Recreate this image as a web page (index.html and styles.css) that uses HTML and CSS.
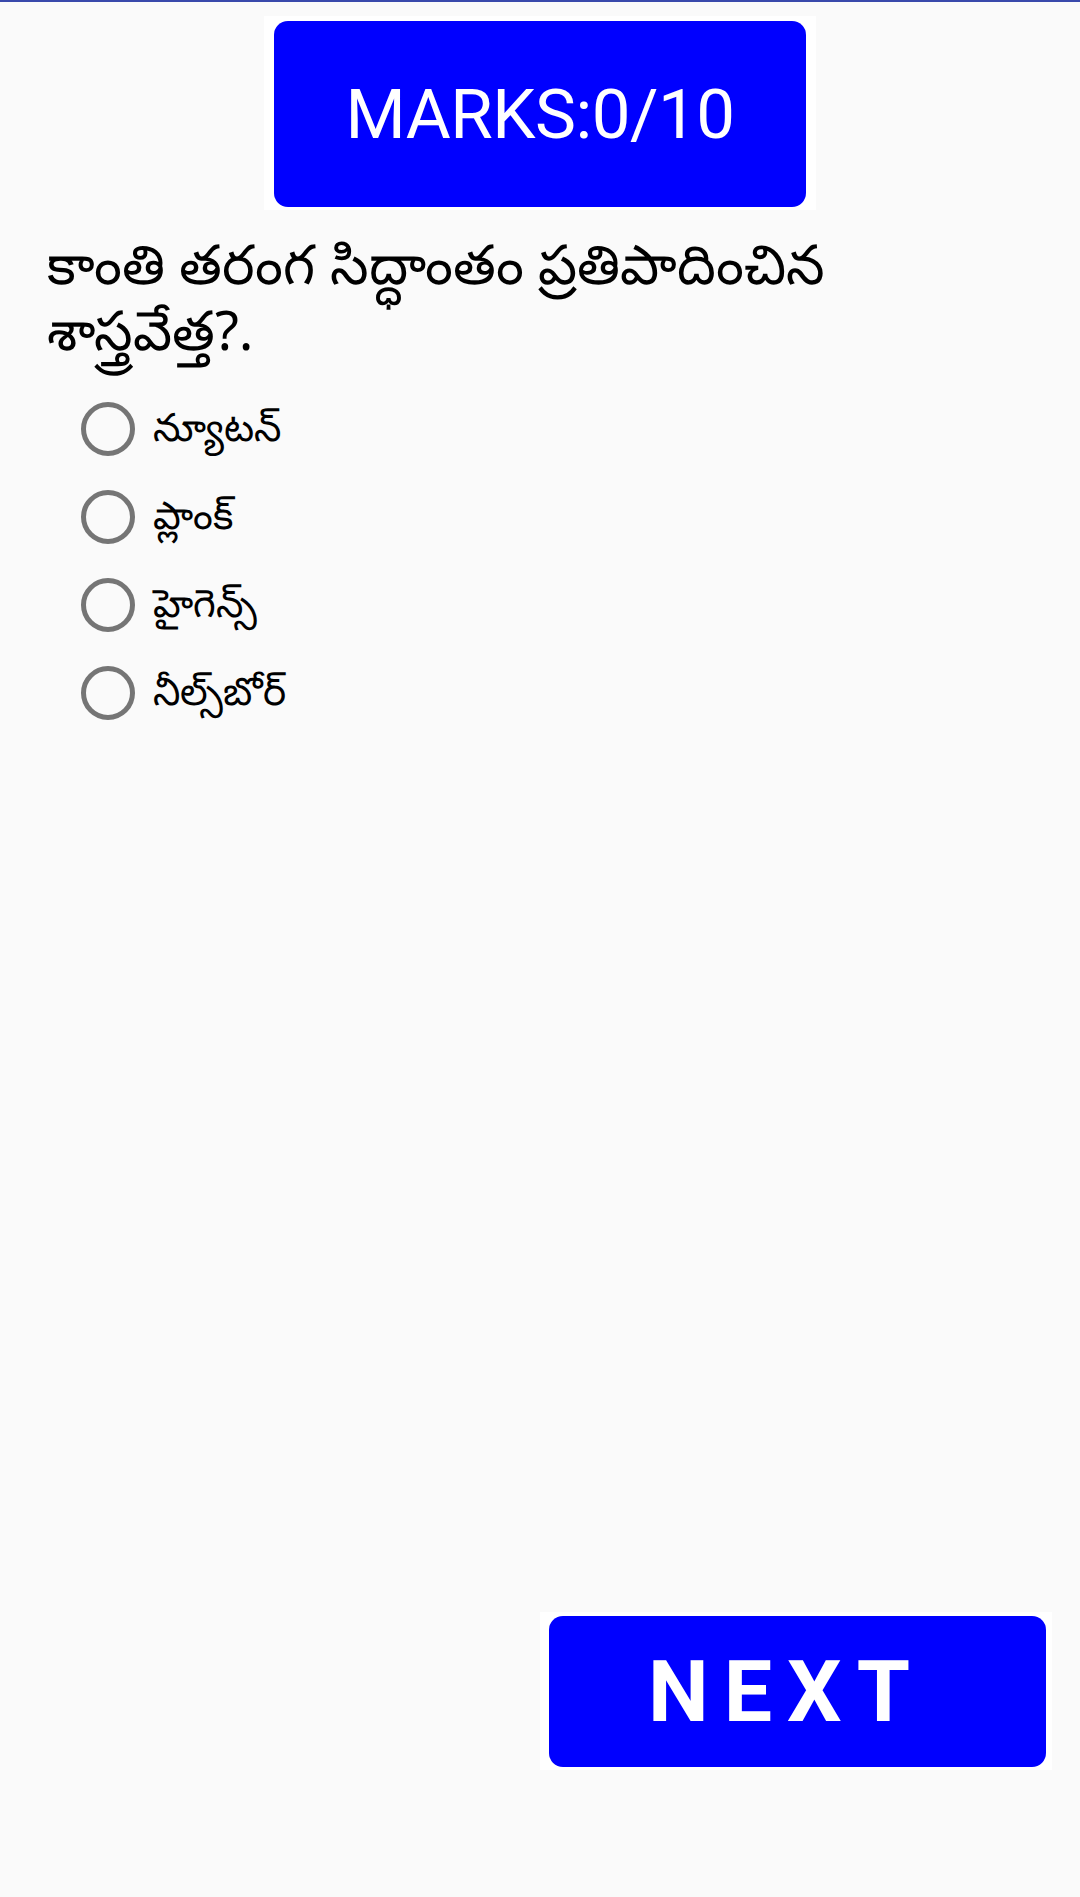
FILE: index.html
```html
<!DOCTYPE html>
<html lang="te">
<head>
<meta charset="utf-8">
<title>Quiz</title>
<link rel="stylesheet" href="styles.css">
</head>
<body>
<div class="screen">
  <div class="topbar"></div>
  <div class="marks-wrap">
    <div class="marks">MARKS:0/10</div>
  </div>
  <p class="question">కాంతి తరంగ సిద్ధాంతం ప్రతిపాదించిన శాస్త్రవేత్త?.</p>
  <ul class="options">
    <li class="option"><span class="radio"></span><span class="label">న్యూటన్</span></li>
    <li class="option"><span class="radio"></span><span class="label">ప్లాంక్</span></li>
    <li class="option"><span class="radio"></span><span class="label">హైగెన్స్</span></li>
    <li class="option"><span class="radio"></span><span class="label">నీల్స్‌బోర్</span></li>
  </ul>
  <div class="next-wrap">
    <div class="next">NEXT</div>
  </div>
</div>
</body>
</html>
```

FILE: styles.css
```css
html, body {
  margin: 0;
  padding: 0;
  background: #fafafa;
}

.screen {
  height: 1897px;
  display: flex;
  flex-direction: column;
  font-family: "Noto Sans", Roboto, sans-serif;
  color: #000;
}

.topbar {
  height: 2px;
  background: #3949ab;
}

.marks-wrap {
  align-self: center;
  margin-top: 14px;
  padding: 5px 10px 3px 10px;
  background: #fff;
}

.marks {
  width: 532px;
  height: 186px;
  border-radius: 14px;
  background: #0000ff;
  color: #fff;
  font-family: Roboto, "Noto Sans", sans-serif;
  font-size: 69px;
  letter-spacing: -0.5px;
  display: flex;
  align-items: center;
  justify-content: center;
}

.question {
  margin: 20px 0 0 0;
  padding: 0 200px 0 47px;
  font-size: 55px;
  line-height: 66px;
}

.options {
  list-style: none;
  margin: 23px 0 0 0;
  padding: 0 0 0 81px;
  display: flex;
  flex-direction: column;
}

.option {
  height: 88px;
  display: flex;
  align-items: center;
  gap: 18px;
}

.radio {
  width: 44px;
  height: 44px;
  border: 5px solid #757575;
  border-radius: 50%;
  flex: none;
}

.label {
  font-size: 39px;
}

.next-wrap {
  margin-top: auto;
  margin-bottom: 127px;
  margin-right: 28px;
  align-self: flex-end;
  padding: 4px 6px 3px 9px;
  background: #fff;
}

.next {
  width: 497px;
  height: 151px;
  border-radius: 14px;
  background: #0000ff;
  color: #fff;
  font-family: Roboto, "Noto Sans", sans-serif;
  font-weight: 700;
  font-size: 86px;
  letter-spacing: 15px;
  display: flex;
  align-items: center;
  justify-content: center;
  box-sizing: border-box;
  padding-right: 22px;
}
```
